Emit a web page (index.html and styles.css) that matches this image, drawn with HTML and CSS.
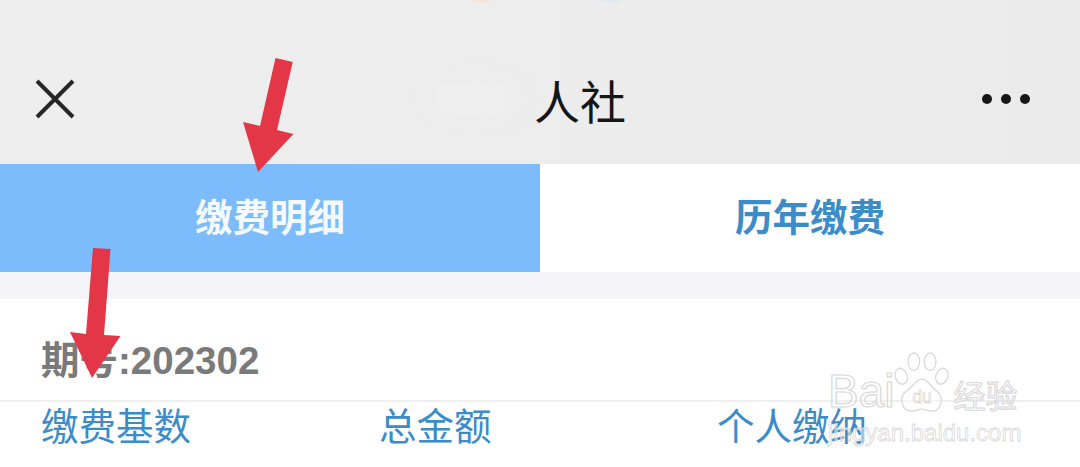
FILE: index.html
```html
<!DOCTYPE html>
<html lang="zh-CN">
<head>
<meta charset="utf-8">
<title>人社</title>
<link rel="stylesheet" href="styles.css">
</head>
<body>
<div class="page">
  <header class="header">
    <svg class="close" width="40" height="40" viewBox="0 0 40 40"><path d="M2 2 L38 38 M38 2 L2 38" stroke="#262626" stroke-width="4" fill="none"/></svg>
    <div class="logo-blur"></div>
    <h1 class="title">人社</h1>
    <div class="dots"><span></span><span></span><span></span></div>
  </header>
  <nav class="tabs">
    <div class="tab tab-active">缴费明细</div>
    <div class="tab">历年缴费</div>
  </nav>
  <div class="gap"></div>
  <section class="card">
    <div class="period">期号:202302</div>
    <div class="cols">
      <div>缴费基数</div>
      <div>总金额</div>
      <div>个人缴纳</div>
    </div>
  </section>
</div>

<svg class="arrows" width="1080" height="467" viewBox="0 0 1080 467">
  <polygon fill="#e33646" points="275.5,58 292.7,62 277,130 293.4,134 258,172 243,122 260,126"/>
  <polygon fill="#e33646" points="93,248 110.5,249 104,335 120.5,336 92,378 70,332 86,334"/>
</svg>

<div class="watermark">
  <div class="wm-top">
    <span class="wm-bai">Bai</span>
    <svg class="paw" width="56" height="62" viewBox="0 0 62 64" preserveAspectRatio="none" fill="rgba(255,255,255,.3)" stroke="#d8d8d8" stroke-width="1.4">
      <ellipse cx="8" cy="25" rx="6.5" ry="8.5" transform="rotate(-25 8 25)"/>
      <ellipse cx="22" cy="10" rx="6.5" ry="9"/>
      <ellipse cx="40" cy="10" rx="6.5" ry="9"/>
      <ellipse cx="53" cy="25" rx="6.5" ry="8.5" transform="rotate(25 53 25)"/>
      <path d="M31 28 C38 28 40 36 47 40 C56 46 53 61 42 61 C37 61 35 59 31 59 C27 59 24 61 19 61 C8 61 5 46 14 40 C21 36 24 28 31 28 Z"/>
      <text x="31" y="53" text-anchor="middle" class="wm-du">du</text>
    </svg>
    <span class="wm-cn">经验</span>
  </div>
  <div class="wm-url">jingyan.baidu.com</div>
</div>
</body>
</html>
```

FILE: styles.css
```css
* { box-sizing: border-box; }
html, body { margin: 0; padding: 0; }
body {
  width: 1080px;
  height: 467px;
  overflow: hidden;
  background: #fff;
  font-family: "Noto Sans CJK SC", "Noto Sans", sans-serif;
}
.page { display: flex; flex-direction: column; height: 467px; overflow: hidden; }

.header {
  height: 164px;
  flex: none;
  display: flex;
  align-items: center;
  padding: 34px 50px 0 35px;
  background:
    radial-gradient(ellipse 14px 3px at 482px 0, #f6e0c8, transparent),
    radial-gradient(ellipse 14px 3px at 609px 0, #d9e8f2, transparent),
    linear-gradient(90deg, #eeeeee, #ebebeb);
}
.close { flex: none; }
.logo-blur {
  width: 90px;
  height: 40px;
  margin-left: 353px;
  margin-right: 16px;
  background: #efefef;
  border-radius: 50%;
  filter: blur(10px);
}
.title {
  margin: 0;
  font-size: 46px;
  font-weight: 400;
  line-height: 60px;
  color: #161616;
}
.dots { margin-left: auto; display: flex; gap: 9px; }
.dots span { width: 10px; height: 10px; border-radius: 50%; background: #161616; }

.tabs { height: 108px; flex: none; display: grid; grid-template-columns: 540px 540px; background: #fff; }
.tab {
  display: flex;
  align-items: center;
  justify-content: center;
  padding-bottom: 8px;
  font-size: 37.5px;
  font-weight: 700;
  color: #3b8cc9;
}
.tab-active { background: #7dbcfc; color: #f4faff; }

.gap { height: 27px; flex: none; background: #f4f4f9; }

.card { flex: 1; background: #fff; }
.period {
  height: 103px;
  padding: 38px 0 0 41px;
  font-family: "Liberation Sans", "Noto Sans CJK SC", sans-serif;
  font-size: 38.5px;
  font-weight: 700;
  line-height: 48px;
  color: #7a7a7a;
  border-bottom: 2px solid #efefef;
}
.cols {
  display: grid;
  grid-template-columns: 338px 338px 338px;
  padding-left: 41px;
  font-size: 37.5px;
  line-height: 44px;
  color: #3b8cc9;
}

.arrows { position: absolute; left: 0; top: 0; pointer-events: none; }

.watermark {
  position: absolute;
  left: 828px;
  top: 352px;
  width: 200px;
  pointer-events: none;
}
.wm-top { display: flex; align-items: flex-end; height: 62px; }
.wm-bai {
  font-family: "Liberation Sans", sans-serif;
  font-size: 46px;
  line-height: 46px;
  color: rgba(255,255,255,.4);
  -webkit-text-stroke: 1.2px #d8d8d8;
}
.paw { flex: none; }
.wm-du {
  font-family: "Liberation Sans", sans-serif;
  font-size: 19px;
  fill: rgba(255,255,255,.4);
  stroke-width: .8;
}
.wm-cn {
  font-size: 32px;
  line-height: 40px;
  margin-left: 3px;
  color: rgba(255,255,255,.4);
  -webkit-text-stroke: 1.1px #d8d8d8;
}
.wm-url {
  font-family: "Liberation Sans", sans-serif;
  font-size: 24px;
  line-height: 28px;
  margin-top: 5px;
  white-space: nowrap;
  color: rgba(255,255,255,.4);
  -webkit-text-stroke: .8px #d8d8d8;
}
```
